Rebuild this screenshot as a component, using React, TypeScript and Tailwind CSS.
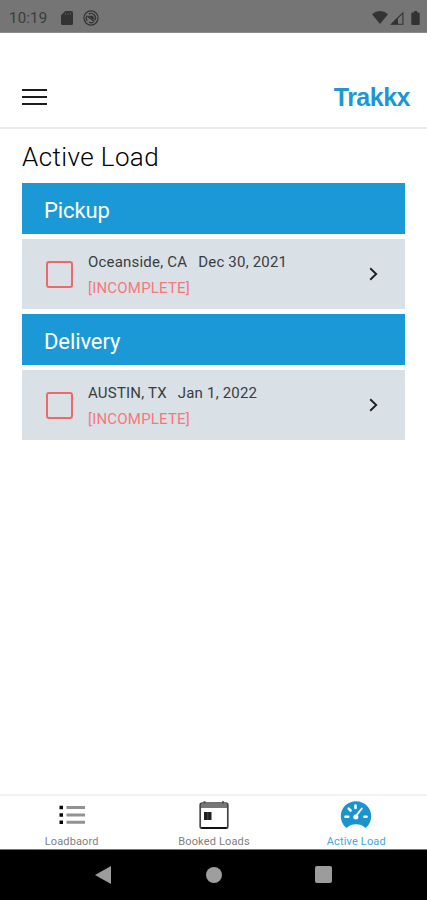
import type { ReactNode } from 'react';

interface Stop {
  title: string;
  place: string;
  date: string;
}

const stops: Stop[] = [
  { title: 'Pickup', place: 'Oceanside, CA', date: 'Dec 30, 2021' },
  { title: 'Delivery', place: 'AUSTIN, TX', date: 'Jan 1, 2022' },
];

function StatusBar() {
  return (
    <div className="flex h-[33px] shrink-0 items-center border-b border-[#8c8c8c] bg-[#757575] pt-[3px] pr-[7px] pl-[9px] text-[#333333]">
      <span className="pt-[2px] text-[15px] leading-none tracking-[0.2px] text-[#3c3c3c]">10:19</span>
      <svg className="ml-[14px] h-[14px] w-[12px]" viewBox="0 0 12 14" fill="currentColor">
        <path d="M4.3 0H10.5Q12 0 12 1.5V12.5Q12 14 10.5 14H1.5Q0 14 0 12.5V4.2Z" />
        <path d="M4.5 1.5V4M7 1.5V4M9.5 1.5V4" stroke="#505050" strokeWidth="1" />
      </svg>
      <svg className="ml-[10px] h-4 w-4" viewBox="0 0 16 16" fill="none" stroke="currentColor">
        <circle cx="8" cy="8" r="7.1" strokeWidth="1.2" />
        <path d="M4.2 11A4.7 4.7 0 0 1 4 5.5M5.8 3.9A4.7 4.7 0 0 1 12.2 10M10.5 12A4.7 4.7 0 0 1 6 12.300" strokeWidth="1.2" />
        <path d="M4.500 6.500L11.500 11.500M6.800 6.300H9.500L10.500 8.800Z" fill="currentColor" strokeWidth="1.300" />
      </svg>
      <svg className="ml-auto h-[13px] w-4" viewBox="0 0 16 13" fill="currentColor">
        <path d="M0 3.2Q3.5 0 8 0T16 3.2L8 13Z" />
      </svg>
      <svg className="ml-[2px] h-[14px] w-[14px]" viewBox="0 0 14 14" fill="none" stroke="currentColor">
        <path d="M12.9 1.8V13.2H1.4Z" strokeWidth="1.1" />
        <path d="M1 13.4L8 6.500V13.4Z" fill="currentColor" stroke="none" />
      </svg>
      <svg className="ml-[7px] h-[14px] w-[9px]" viewBox="0 0 9 15" fill="currentColor">
        <path d="M2.8 0H6.2V1.5H8Q9 1.5 9 2.5V14Q9 15 8 15H1Q0 15 0 14V2.5Q0 1.5 1 1.5H2.8Z" />
      </svg>
    </div>
  );
}

function Header() {
  return (
    <header className="flex h-24 shrink-0 items-end justify-between border-b-2 border-[#ebebeb] pr-[17px] pl-[22px]">
      <button aria-label="Menu" className="mb-[22px] flex flex-col gap-[5px]">
        <span className="h-[2px] w-[25px] bg-[#1c1c1c]" />
        <span className="h-[2px] w-[25px] bg-[#1c1c1c]" />
        <span className="h-[2px] w-[25px] bg-[#1c1c1c]" />
      </button>
      <span className="mb-[16px] font-['Liberation_Sans',sans-serif] text-[25px] leading-[28px] font-bold tracking-[-0.5px] text-[#1d97d2]">
        Trakkx
      </span>
    </header>
  );
}

function StopSection({ title, place, date }: Stop) {
  return (
    <section className="mb-[5px]">
      <h2 className="flex h-[51px] items-center bg-[#1b99d6] pt-[3px] pl-[22px] text-[22px] tracking-[-0.1px] text-white">
        {title}
      </h2>
      <div className="mt-[5px] flex h-[70px] items-center bg-[#d9e0e6] pr-[27px] pl-6">
        <span className="h-[27px] w-[27px] rounded-[3px] border-2 border-[#f0686b]" />
        <div className="ml-[15px] pt-[2px] text-[15px] leading-[26px] tracking-[0.2px]">
          <p className="text-[#3a3d40]">
            <span>{place}</span>
            <span className="ml-[11px]">{date}</span>
          </p>
          <p className="text-[#f4797c]">[INCOMPLETE]</p>
        </div>
        <svg className="ml-auto h-[14px] w-[9px]" viewBox="0 0 9 14" fill="none" stroke="#1f1f1f" strokeWidth="1.9">
          <path d="M1.2 1.2L7.2 7L1.2 12.8" />
        </svg>
      </div>
    </section>
  );
}

function Tab({ label, active, children }: { label: string; active?: boolean; children: ReactNode }) {
  return (
    <button className="flex flex-1 flex-col items-center pt-[4px] pl-[1px]">
      {children}
      <span
        className={`mt-[6px] text-[11px] leading-[12px] tracking-[0.15px] ${
          active ? 'text-[#4aa5d8]' : 'text-[#808080]'
        }`}
      >
        {label}
      </span>
    </button>
  );
}

function TabBar() {
  return (
    <nav className="flex h-[55px] shrink-0 border-t-2 border-[#f3f3f3]">
      <Tab label="Loadbaord">
        <svg className="h-[30px] w-[30px]" viewBox="0 0 30 30">
          <path d="M9.5 7.500H28M9.5 15H28M9.5 22.2H28" stroke="#929292" strokeWidth="3" />
          <path d="M2.5 7.500H6M2.5 15H6M2.5 22.2H6" stroke="#050505" strokeWidth="3.6" />
        </svg>
      </Tab>
      <Tab label="Booked Loads">
        <svg className="h-[30px] w-[30px]" viewBox="0 0 30 30" fill="none">
          <path d="M5.500 1V4M24 1V4" stroke="#777777" strokeWidth="2" />
          <rect x="1.2" y="3" width="27.6" height="25.2" rx="2" stroke="#444444" strokeWidth="1.700" />
          <path d="M2 3.500H28V8H2Z" fill="#777777" />
          <path d="M2.5 28H27.5" stroke="#111111" strokeWidth="2" />
          <path d="M5 12H12.5V20H5Z" fill="#202020" />
          <path d="M8.800 12V20" stroke="#666666" strokeWidth="0.6" />
        </svg>
      </Tab>
      <Tab label="Active Load" active>
        <svg className="h-[30px] w-[32px]" viewBox="0 0 32 30">
          <path
            d="M16 1.2C7.5 1.2 .8 7.8 .8 16C.8 20.8 2.8 25 5.8 27.500Q6.600 28 7.500 27.300C9.500 25.500 12 24.300 16 24.300S22.500 25.500 24.500 27.300Q25.400 28 26.200 27.500C29.200 25 31.200 20.800 31.200 16C31.200 7.800 24.500 1.200 16 1.200Z"
            fill="#1b93cf"
          />
          <g stroke="#ffffff" strokeLinecap="round">
            <path d="M5.500 16.700H8.200M24.500 16.700H26.500" strokeWidth="2.600" />
            <path d="M8.700 8.700L10.500 10.500M15.500 5.500V8" strokeWidth="2.600" />
            <path d="M21.800 8.500L16 16" strokeWidth="2" />
          </g>
          <circle cx="15.800" cy="17" r="2.500" fill="#ffffff" />
        </svg>
      </Tab>
    </nav>
  );
}

function SystemNav() {
  return (
    <div className="flex h-[51px] shrink-0 items-center justify-between border-t border-[#777777] bg-black pr-[95px] pb-px pl-[95px]">
      <svg className="h-[18px] w-4" viewBox="0 0 16 18" fill="#9c9c9c">
        <path d="M16 0V18L0 9Z" />
      </svg>
      <span className="ml-[2px] h-4 w-4 rounded-full bg-[#9e9e9e]" />
      <span className="h-[17px] w-[17px] rounded-[2px] bg-[#9c9c9c]" />
    </div>
  );
}

export default function App() {
  return (
    <div className="flex h-[900px] w-[427px] flex-col overflow-hidden bg-white font-[Roboto,sans-serif]">
      <StatusBar />
      <Header />
      <main className="flex-1 px-[22px] pt-[12px]">
        <h1 className="mb-[10px] text-[26px] leading-8 font-light tracking-[0.4px] text-black">Active Load</h1>
        {stops.map((stop) => (
          <StopSection key={stop.title} {...stop} />
        ))}
      </main>
      <TabBar />
      <SystemNav />
    </div>
  );
}
